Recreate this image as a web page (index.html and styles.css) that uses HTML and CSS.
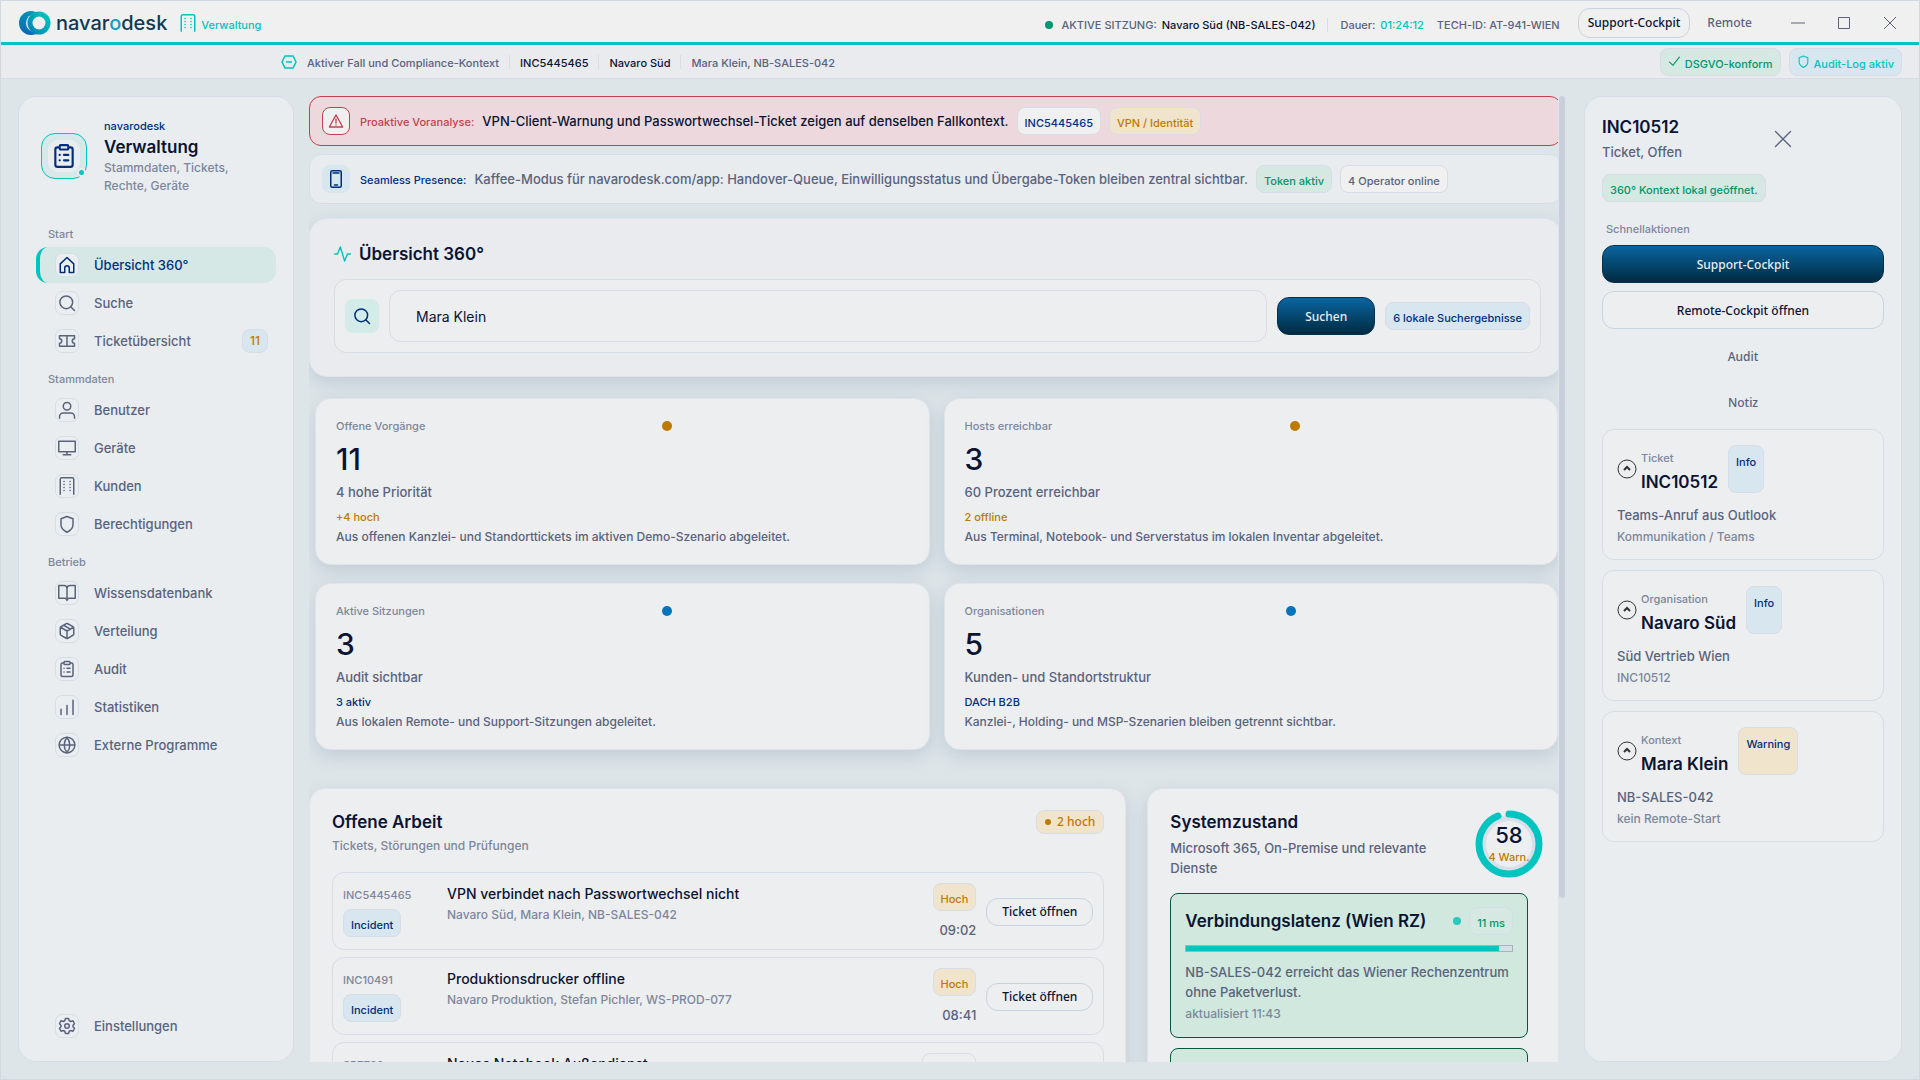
FILE: index.html
```html
<!DOCTYPE html>
<html lang="de">
<head>
    <meta charset="UTF-8">
    <meta name="viewport" content="width=device-width, initial-scale=1.0">
    <title>navarodesk Verwaltung</title>
    <link rel="stylesheet" href="styles.css">
</head>
<body>
    <!-- Shared icons -->
    <svg class="icon-defs" aria-hidden="true">
        <symbol id="i-clipboard" viewBox="0 0 24 24"><rect x="4" y="4" width="16" height="18" rx="2"/><rect x="8" y="2" width="8" height="4" rx="1" fill="#e9edf0"/><path d="M8 11h.1M12 11h4M8 16h.1M12 16h4"/></symbol>
        <symbol id="i-home" viewBox="0 0 24 24"><path d="M3 10.500 12 2l9 8.500V22h-6v-6a3 3 0 0 0-6 0v6H3z"/></symbol>
        <symbol id="i-search" viewBox="0 0 24 24"><circle cx="11" cy="11" r="8.500"/><path d="m17 17 5 5"/></symbol>
        <symbol id="i-ticket" viewBox="0 0 24 24"><path d="M2 9a3 3 0 0 1 0 6v4h20v-4a3 3 0 0 1 0-6V5H2zM12 5v14"/></symbol>
        <symbol id="i-user" viewBox="0 0 24 24"><circle cx="12" cy="7" r="5"/><path d="M2 23v-2a5 5 0 0 1 5-5h10a5 5 0 0 1 5 5v2"/></symbol>
        <symbol id="i-monitor" viewBox="0 0 24 24"><path d="M1 3h22v14H1zM12 17v4M7 21h10"/></symbol>
        <symbol id="i-building" viewBox="0 0 24 24"><path d="M3 23V3a2 2 0 0 1 2-2h14a2 2 0 0 1 2 2v20"/><path d="M8 6h.1M8 10h.1M8 14h.1M8 18h.1M16 6h.1M16 10h.1M16 14h.1M16 18h.1"/></symbol>
        <symbol id="i-shield" viewBox="0 0 24 24"><path d="M12 23s8-4 8-10V5l-8-3-8 3v8c0 6 8 10 8 10z"/></symbol>
        <symbol id="i-book" viewBox="0 0 24 24"><path d="M1 2h7a4 4 0 0 1 4 4v16a3 3 0 0 0-3-3H1zM23 2h-7a4 4 0 0 0-4 4v16a3 3 0 0 1 3-3h8z"/></symbol>
        <symbol id="i-box" viewBox="0 0 24 24"><path d="M21 16V8a2 2 0 0 0-1-1.700l-7-4a2 2 0 0 0-2 0l-7 4A2 2 0 0 0 3 8v8a2 2 0 0 0 1 1.700l7 4a2 2 0 0 0 2 0l7-4a2 2 0 0 0 1-1.700zM3.300 7 12 12l8.700-5M12 22V12M7.500 4.300l9 5.100"/></symbol>
        <symbol id="i-chart" viewBox="0 0 24 24"><path d="M4 22v-7M12 22V10M20 22V3"/></symbol>
        <symbol id="i-globe" viewBox="0 0 24 24"><circle cx="12" cy="12" r="10.500"/><path d="M2 12h20M12 2c-5 6-5 14 0 20M12 2c5 6 5 14 0 20"/></symbol>
        <symbol id="i-gear" viewBox="0 0 24 24"><circle cx="12" cy="12" r="3"/><path d="M10 2h4l1 3 2 1 3-1 2 4-2 2v2l2 2-2 4-3-1-2 1-1 3h-4l-1-3-2-1-3 1-2-4 2-2v-2L2 9l2-4 3 1 2-1z"/></symbol>
        <symbol id="i-warning" viewBox="0 0 24 24"><path d="M12 3 2 21h20zM12 9v6M12 18h.1"/></symbol>
        <symbol id="i-phone" viewBox="0 0 24 24"><rect x="5" y="1" width="14" height="22" rx="2"/><path d="M8 4h8M10 20h4"/></symbol>
        <symbol id="i-pulse" viewBox="0 0 24 24"><path d="M1 12h4L9 2l6 20 4-10h4"/></symbol>
        <symbol id="i-check" viewBox="0 0 24 24"><path d="m3 13 6 6L21 4"/></symbol>
        <symbol id="i-close" viewBox="0 0 24 24"><path d="m3 3 18 18M21 3 3 21"/></symbol>
        <symbol id="i-up" viewBox="0 0 20 20"><circle cx="10" cy="10" r="9"/><path d="m7 11 3-3 3 3" stroke-width="2"/></symbol>
    </svg>

    <header class="titlebar">
        <a href="#" class="brand">
            <svg class="brand-logo" viewBox="0 0 32 24">
                <defs>
                    <linearGradient id="logoBlue" x1="0" y1="0" x2="0" y2="1"><stop offset="0" stop-color="#0792b5"/><stop offset="1" stop-color="#0868b4"/></linearGradient>
                    <linearGradient id="logoTeal" x1="0" y1="1" x2="1" y2="0"><stop offset="0" stop-color="#0780b8"/><stop offset="1" stop-color="#00c8bd"/></linearGradient>
                </defs>
                <circle cx="12" cy="12" r="12" fill="url(#logoBlue)"/>
                <ellipse cx="17" cy="12" rx="10" ry="9.500" fill="#f0f0f0"/>
                <circle cx="20" cy="12" r="9" fill="#f0f0f0" stroke="url(#logoTeal)" stroke-width="5"/>
            </svg>
            <span class="brand-name">navar<span class="brand-o">o</span>desk</span>
        </a>
        <span class="area"><svg class="icon"><use href="#i-building"/></svg>Verwaltung</span>
        <div class="session">
            <span class="dot green"></span>
            <span>AKTIVE SITZUNG:</span>
            <strong>Navaro Süd (NB-SALES-042)</strong>
            <span class="divider"></span>
            <span>Dauer:</span>
            <span class="teal">01:24:12</span>
            <span class="tech">TECH-ID: AT-941-WIEN</span>
        </div>
        <button class="btn pill">Support-Cockpit</button>
        <button class="btn ghost remote">Remote</button>
        <div class="window-buttons">
            <button aria-label="Minimieren"><svg viewBox="0 0 14 14"><path d="M0 7h14"/></svg></button>
            <button aria-label="Maximieren"><svg viewBox="0 0 14 14"><path d="M1.500 1.500h11v11h-11z"/></svg></button>
            <button aria-label="Schließen"><svg viewBox="0 0 14 14"><path d="m1 1 12 12M13 1 1 13"/></svg></button>
        </div>
    </header>

    <div class="contextbar">
        <svg class="context-icon" viewBox="0 0 16 14"><path d="m4 1-3 6 3 6h8l3-6-3-6zM5 7h6"/></svg>
        <span>Aktiver Fall und Compliance-Kontext</span>
        <span class="divider"></span>
        <strong>INC5445465</strong>
        <span class="divider"></span>
        <strong>Navaro Süd</strong>
        <span class="divider"></span>
        <span>Mara Klein, NB-SALES-042</span>
        <div class="context-chips">
            <span class="chip chip-green"><svg class="icon small"><use href="#i-check"/></svg>DSGVO-konform</span>
            <span class="chip chip-blue teal"><svg class="icon small"><use href="#i-shield"/></svg>Audit-Log aktiv</span>
        </div>
    </div>

    <div class="layout">
        <!-- Sidebar -->
        <aside class="sidebar">
            <div class="profile">
                <div class="profile-icon"><span><svg class="icon"><use href="#i-clipboard"/></svg></span></div>
                <div>
                    <div class="profile-app">navarodesk</div>
                    <h1>Verwaltung</h1>
                    <p>Stammdaten, Tickets, Rechte, Geräte</p>
                </div>
            </div>
            <nav class="nav">
                <h2>Start</h2>
                <a href="#" class="nav-link active"><span class="nav-icon"><svg class="icon"><use href="#i-home"/></svg></span>Übersicht 360°</a>
                <a href="#" class="nav-link"><span class="nav-icon"><svg class="icon"><use href="#i-search"/></svg></span>Suche</a>
                <a href="#" class="nav-link"><span class="nav-icon"><svg class="icon"><use href="#i-ticket"/></svg></span>Ticketübersicht<span class="nav-count">11</span></a>
                <h2>Stammdaten</h2>
                <a href="#" class="nav-link"><span class="nav-icon"><svg class="icon"><use href="#i-user"/></svg></span>Benutzer</a>
                <a href="#" class="nav-link"><span class="nav-icon"><svg class="icon"><use href="#i-monitor"/></svg></span>Geräte</a>
                <a href="#" class="nav-link"><span class="nav-icon"><svg class="icon"><use href="#i-building"/></svg></span>Kunden</a>
                <a href="#" class="nav-link"><span class="nav-icon"><svg class="icon"><use href="#i-shield"/></svg></span>Berechtigungen</a>
                <h2>Betrieb</h2>
                <a href="#" class="nav-link"><span class="nav-icon"><svg class="icon"><use href="#i-book"/></svg></span>Wissensdatenbank</a>
                <a href="#" class="nav-link"><span class="nav-icon"><svg class="icon"><use href="#i-box"/></svg></span>Verteilung</a>
                <a href="#" class="nav-link"><span class="nav-icon"><svg class="icon"><use href="#i-clipboard"/></svg></span>Audit</a>
                <a href="#" class="nav-link"><span class="nav-icon"><svg class="icon"><use href="#i-chart"/></svg></span>Statistiken</a>
                <a href="#" class="nav-link"><span class="nav-icon"><svg class="icon"><use href="#i-globe"/></svg></span>Externe Programme</a>
                <a href="#" class="nav-link settings"><span class="nav-icon"><svg class="icon"><use href="#i-gear"/></svg></span>Einstellungen</a>
            </nav>
        </aside>

        <!-- Main content -->
        <div class="main">
            <main class="content">
                <div class="alert alert-red">
                    <span class="alert-icon"><svg class="icon"><use href="#i-warning"/></svg></span>
                    <span class="alert-label">Proaktive Voranalyse:</span>
                    <span class="alert-text">VPN-Client-Warnung und Passwortwechsel-Ticket zeigen auf denselben Fallkontext.</span>
                    <span class="chip chip-plain navy">INC5445465</span>
                    <span class="chip chip-amber">VPN / Identität</span>
                </div>
                <div class="alert">
                    <span class="alert-icon"><svg class="icon"><use href="#i-phone"/></svg></span>
                    <span class="alert-label">Seamless Presence:</span>
                    <span class="alert-text">Kaffee-Modus für navarodesk.com/app: Handover-Queue, Einwilligungsstatus und Übergabe-Token bleiben zentral sichtbar.</span>
                    <span class="chip chip-green">Token aktiv</span>
                    <span class="chip chip-plain">4 Operator online</span>
                </div>

                <section class="search-panel">
                    <h2><svg class="icon"><use href="#i-pulse"/></svg>Übersicht 360°</h2>
                    <form class="search">
                        <label class="search-icon" for="q" aria-label="Suche"><svg class="icon"><use href="#i-search"/></svg></label>
                        <input id="q" type="text" value="Mara Klein">
                        <button type="button" class="btn primary">Suchen</button>
                        <span class="chip chip-blue">6 lokale Suchergebnisse</span>
                    </form>
                </section>

                <section class="stats">
                    <article class="stat">
                        <div class="stat-head"><span>Offene Vorgänge</span><i class="amber-dot"></i></div>
                        <div class="stat-value">11</div>
                        <div class="stat-sub">4 hohe Priorität</div>
                        <div class="stat-trend amber">+4 hoch</div>
                        <p>Aus offenen Kanzlei- und Standorttickets im aktiven Demo-Szenario abgeleitet.</p>
                    </article>
                    <article class="stat">
                        <div class="stat-head"><span>Hosts erreichbar</span><i class="amber-dot"></i></div>
                        <div class="stat-value">3</div>
                        <div class="stat-sub">60 Prozent erreichbar</div>
                        <div class="stat-trend amber">2 offline</div>
                        <p>Aus Terminal, Notebook- und Serverstatus im lokalen Inventar abgeleitet.</p>
                    </article>
                    <article class="stat">
                        <div class="stat-head"><span>Aktive Sitzungen</span><i></i></div>
                        <div class="stat-value">3</div>
                        <div class="stat-sub">Audit sichtbar</div>
                        <div class="stat-trend">3 aktiv</div>
                        <p>Aus lokalen Remote- und Support-Sitzungen abgeleitet.</p>
                    </article>
                    <article class="stat">
                        <div class="stat-head"><span>Organisationen</span><i></i></div>
                        <div class="stat-value">5</div>
                        <div class="stat-sub">Kunden- und Standortstruktur</div>
                        <div class="stat-trend">DACH B2B</div>
                        <p>Kanzlei-, Holding- und MSP-Szenarien bleiben getrennt sichtbar.</p>
                    </article>
                </section>

                <div class="columns">
                    <section class="panel work">
                        <header class="panel-head">
                            <div>
                                <h2>Offene Arbeit</h2>
                                <p>Tickets, Störungen und Prüfungen</p>
                            </div>
                            <span class="badge">2 hoch</span>
                        </header>
                        <ul class="tickets">
                            <li>
                                <div class="ticket-id">INC5445465<span class="chip chip-blue">Incident</span></div>
                                <div class="ticket-text"><h3>VPN verbindet nach Passwortwechsel nicht</h3><p>Navaro Süd, Mara Klein, NB-SALES-042</p></div>
                                <div class="ticket-state"><span class="chip chip-amber">Hoch</span><time>09:02</time></div>
                                <button class="btn">Ticket öffnen</button>
                            </li>
                            <li>
                                <div class="ticket-id">INC10491<span class="chip chip-blue">Incident</span></div>
                                <div class="ticket-text"><h3>Produktionsdrucker offline</h3><p>Navaro Produktion, Stefan Pichler, WS-PROD-077</p></div>
                                <div class="ticket-state"><span class="chip chip-amber">Hoch</span><time>08:41</time></div>
                                <button class="btn">Ticket öffnen</button>
                            </li>
                            <li>
                                <div class="ticket-id">SR7792<span class="chip chip-blue">Service</span></div>
                                <div class="ticket-text"><h3>Neues Notebook Außendienst</h3><p>Navaro Süd</p></div>
                                <div class="ticket-state"><span class="chip">Normal</span><time>08:15</time></div>
                                <button class="btn">Ticket öffnen</button>
                            </li>
                        </ul>
                    </section>

                    <section class="panel health">
                        <header class="panel-head">
                            <div>
                                <h2>Systemzustand</h2>
                                <p>Microsoft 365, On-Premise und relevante Dienste</p>
                            </div>
                            <div class="ring">
                                <svg viewBox="0 0 68 68">
                                    <circle class="ring-track" cx="34" cy="34" r="26"/>
                                    <circle class="ring-value" cx="34" cy="34" r="30" pathLength="100"/>
                                </svg>
                                <strong>58</strong>
                                <span>4 Warn.</span>
                            </div>
                        </header>
                        <article class="service">
                            <div class="service-head"><h3>Verbindungslatenz (Wien RZ)</h3><span class="dot"></span><span class="chip chip-green">11 ms</span></div>
                            <progress value="96" max="100" aria-label="Verbindungslatenz"></progress>
                            <p>NB-SALES-042 erreicht das Wiener Rechenzentrum ohne Paketverlust.</p>
                            <small>aktualisiert 11:43</small>
                        </article>
                        <article class="service">
                            <div class="service-head"><h3>Microsoft 365</h3></div>
                        </article>
                    </section>
                </div>
            </main>
            <div class="scrollbar"></div>
        </div>

        <!-- Context panel -->
        <aside class="details">
            <header class="details-head">
                <div>
                    <h2>INC10512</h2>
                    <p>Ticket, Offen</p>
                </div>
                <button aria-label="Schließen"><svg class="icon"><use href="#i-close"/></svg></button>
            </header>
            <span class="chip chip-green">360° Kontext lokal geöffnet.</span>
            <h3>Schnellaktionen</h3>
            <div class="actions">
                <button class="btn primary">Support-Cockpit</button>
                <button class="btn">Remote-Cockpit öffnen</button>
                <button class="btn ghost">Audit</button>
                <button class="btn ghost">Notiz</button>
            </div>
            <article class="fact">
                <div class="fact-head">
                    <svg class="fact-icon"><use href="#i-up"/></svg>
                    <div><span>Ticket</span><h4>INC10512</h4></div>
                    <span class="chip chip-blue">Info</span>
                </div>
                <p>Teams-Anruf aus Outlook</p>
                <small>Kommunikation / Teams</small>
            </article>
            <article class="fact">
                <div class="fact-head">
                    <svg class="fact-icon"><use href="#i-up"/></svg>
                    <div><span>Organisation</span><h4>Navaro Süd</h4></div>
                    <span class="chip chip-blue">Info</span>
                </div>
                <p>Süd Vertrieb Wien</p>
                <small>INC10512</small>
            </article>
            <article class="fact">
                <div class="fact-head">
                    <svg class="fact-icon"><use href="#i-up"/></svg>
                    <div><span>Kontext</span><h4>Mara Klein</h4></div>
                    <span class="chip chip-amber navy">Warning</span>
                </div>
                <p>NB-SALES-042</p>
                <small>kein Remote-Start</small>
            </article>
        </aside>
    </div>
</body>
</html>
```

FILE: styles.css
```css
:root {
    --ink: #0a1432;
    --text: #59637c;
    --muted: #7c879c;
    --navy: #002f7a;
    --teal: #00c4bf;
    --green: #00966e;
    --amber: #be7a00;
    --red: #c0414f;
    --line: #d6dde6;
    --card: #edeef0;
    --panel: #e9edf0;
}
* {
    box-sizing: border-box;
}
body {
    margin: 0;
    height: 100vh;
    display: flex;
    flex-direction: column;
    overflow: hidden;
    border: 1px solid #d3d8e0;
    background: #dde5e8;
    color: var(--text);
    font-family: Inter, "Noto Sans", sans-serif;
    font-size: 13px;
    font-weight: 500;
    line-height: 20px;
}
h1, h2, h3, h4, p, ul {
    margin: 0;
    padding: 0;
}
h1, h2, h3, h4 {
    color: var(--ink);
    font-size: 17px;
    font-weight: 600;
    line-height: 24px;
}
strong {
    color: var(--ink);
    font-weight: 500;
}
a {
    color: inherit;
    text-decoration: none;
}
button {
    font-family: inherit;
    cursor: pointer;
}
.icon-defs {
    display: none;
}
.icon {
    width: 18px;
    height: 18px;
    fill: none;
    stroke: currentColor;
    stroke-width: 2;
    stroke-linecap: round;
    stroke-linejoin: round;
    flex: none;
}
.icon.small {
    width: 13px;
    height: 13px;
    margin-top: -4px;
}
.teal {
    color: var(--teal);
}
.amber {
    color: var(--amber);
}
.dot {
    width: 8px;
    height: 8px;
    border-radius: 50%;
    background: #2cc8bd;
    flex: none;
}
.dot.green {
    background: var(--green);
}
.divider {
    width: 1px;
    height: 14px;
    background: var(--line);
}

/* Chips and buttons */
.chip {
    display: inline-flex;
    align-items: center;
    gap: 4px;
    height: 28px;
    padding: 4px 7px 0;
    border: 1px solid var(--line);
    border-radius: 8px;
    font-size: 11px;
    line-height: 16px;
    white-space: nowrap;
    flex: none;
}
.chip-green {
    background: #d6e8e2;
    color: var(--green);
}
.chip-blue {
    background: #d8e6ef;
    color: var(--navy);
}
.chip-amber {
    background: #f0e4cd;
    color: var(--amber);
}
.chip-plain {
    background: #f0f0f1;
}
.chip.navy {
    color: var(--navy);
}
.chip.teal {
    color: var(--teal);
}
.btn {
    height: 38px;
    padding: 0 15px;
    border: 1px solid #c8d3e0;
    border-radius: 12px;
    background: var(--card);
    color: var(--ink);
    font-family: "Noto Sans", "Open Sans", sans-serif;
    font-size: 12px;
    font-weight: 500;
    white-space: nowrap;
}
.btn.primary {
    background: linear-gradient(#0a659f, #002a42);
    border-color: #00304a;
    color: #e9edf0;
}
.btn.ghost {
    background: none;
    border-color: transparent;
    color: var(--text);
}

/* Title bar */
.titlebar {
    display: flex;
    align-items: center;
    height: 44px;
    padding: 2px 6px 0 18px;
    background: #f0f0f0;
    border-bottom: 3px solid var(--teal);
    font-size: 11px;
    flex: none;
}
.brand {
    display: flex;
    align-items: center;
    gap: 5px;
}
.brand-logo {
    width: 32px;
    height: 24px;
}
.brand-name {
    color: #0f3a52;
    font-size: 20px;
}
.brand-o {
    color: #0b9fc0;
}
.area {
    display: flex;
    align-items: center;
    gap: 4px;
    margin-left: 12px;
    padding-top: 4px;
    color: var(--teal);
}
.area .icon {
    margin-top: -4px;
}
.session {
    display: flex;
    align-items: center;
    gap: 5px;
    margin-left: auto;
    padding-top: 4px;
}
.session .divider {
    margin: 0 7px;
}
.session .dot {
    margin-right: 3px;
}
.session .tech {
    margin-left: 8px;
}
.btn.pill {
    height: 30px;
    margin-left: 18px;
    padding: 0 9px;
    background: #f0f0f0;
}
.btn.remote {
    height: 30px;
    padding: 0 16px;
}
.window-buttons {
    display: flex;
    margin-left: 6px;
}
.window-buttons button {
    display: flex;
    padding: 8px 16px;
    border: 0;
    background: none;
}
.window-buttons svg {
    width: 14px;
    height: 14px;
    fill: none;
    stroke: var(--text);
    stroke-width: 1;
}

/* Context bar */
.contextbar {
    display: flex;
    align-items: center;
    gap: 10px;
    height: 34px;
    padding: 0 17px 0 280px;
    background: #e9ebef;
    border-bottom: 1px solid var(--line);
    font-size: 11px;
    flex: none;
}
.contextbar > span:not(.divider),
.contextbar > strong {
    padding-top: 3px;
}
.context-icon {
    width: 16px;
    height: 14px;
    fill: none;
    stroke: var(--teal);
    stroke-width: 1.5;
}
.context-chips {
    display: flex;
    gap: 8px;
    margin-left: auto;
}

.layout {
    flex: 1;
    min-height: 0;
    display: grid;
    grid-template-columns: 276px minmax(0, 1fr) 318px;
    gap: 15px;
    padding: 17px;
}

/* Sidebar */
.sidebar {
    display: flex;
    flex-direction: column;
    padding: 18px 17px 17px;
    background: var(--panel);
    border: 1px solid var(--line);
    border-radius: 18px;
}
.profile {
    display: flex;
    align-items: center;
    gap: 17px;
    padding: 2px 5px 0;
}
.profile-icon {
    position: relative;
    width: 46px;
    height: 46px;
    padding: 6px;
    border: 1px solid var(--teal);
    border-radius: 14px;
    background: #d6e8e8;
    color: var(--navy);
    flex: none;
}
.profile-icon span {
    display: flex;
    align-items: center;
    justify-content: center;
    height: 100%;
    border-radius: 10px;
    background: #e9edf0;
}
.profile-icon .icon {
    width: 26px;
    height: 26px;
}
.profile-icon::after {
    content: "";
    position: absolute;
    right: 0;
    bottom: 1px;
    width: 5px;
    height: 5px;
    border: 2px solid var(--panel);
    border-radius: 50%;
    background: var(--teal);
}
.profile-app {
    color: var(--navy);
    font-size: 11px;
    line-height: 18px;
}
.profile p {
    color: var(--muted);
    font-size: 12px;
    line-height: 18px;
}
.nav {
    flex: 1;
    display: flex;
    flex-direction: column;
    gap: 2px;
    padding-top: 21px;
}
.nav h2 {
    margin: 9px 12px 0;
    color: var(--muted);
    font-size: 11px;
    font-weight: 500;
    line-height: 18px;
}
.nav h2 + .nav-link {
    margin-top: 2px;
}
.nav-link {
    display: flex;
    align-items: center;
    gap: 15px;
    height: 36px;
    padding: 0 8px 0 15px;
    border-left: 4px solid transparent;
    border-radius: 12px;
}
.nav-link.active {
    background: #d6e8e6;
    border-left-color: var(--teal);
    color: var(--navy);
}
.nav-icon {
    display: flex;
    align-items: center;
    justify-content: center;
    width: 24px;
    height: 24px;
    border: 1px solid var(--line);
    border-radius: 7px;
    background: #ebeef1;
}
.nav-count {
    margin-left: auto;
    padding: 0 7px;
    border: 1px solid var(--line);
    border-radius: 8px;
    background: #d8e6ef;
    color: var(--amber);
    font-size: 12px;
    line-height: 22px;
}
.nav-link.settings {
    margin-top: auto;
}

/* Main content */
.main {
    display: flex;
    gap: 1px;
    min-height: 0;
    padding-right: 4px;
}
.content {
    flex: 1;
    min-width: 0;
    overflow: hidden;
}
.content > * {
    margin-right: -4px;
}
.scrollbar {
    width: 6px;
    height: 83%;
    border-radius: 3px;
    background: #c8d0dc;
}
.alert {
    display: flex;
    align-items: center;
    gap: 8px;
    height: 50px;
    margin-bottom: 8px;
    padding: 0 12px;
    border: 1px solid var(--line);
    border-radius: 12px;
    background: #e8ecef;
}
.alert-icon {
    display: flex;
    align-items: center;
    justify-content: center;
    width: 28px;
    height: 28px;
    margin-right: 2px;
    border-radius: 8px;
    background: #d8e6ef;
    color: var(--navy);
}
.alert-label {
    padding-top: 2px;
    color: var(--navy);
    font-size: 11px;
}
.alert-red {
    border-color: var(--red);
    background: #edd9dd;
}
.alert-red .alert-icon {
    border: 1px solid var(--red);
    background: #f0f0f0;
    color: var(--red);
}
.alert-red .icon {
    width: 16px;
    height: 16px;
}
.alert-red .alert-label {
    color: var(--red);
}
.alert-red .alert-text {
    color: var(--ink);
}
.search-panel {
    margin-top: 14px;
    padding: 23px 20px 23px 24px;
    border: 1px solid #e0e4ea;
    border-radius: 18px;
    background: #e9ebef;
    box-shadow: 0 6px 18px rgba(120, 140, 170, 0.28);
}
.search-panel h2 {
    display: flex;
    align-items: center;
    gap: 8px;
    margin-bottom: 13px;
}
.search-panel h2 .icon {
    width: 17px;
    color: var(--teal);
}
.search {
    display: flex;
    align-items: center;
    gap: 10px;
    padding: 10px;
    border: 1px solid var(--line);
    border-radius: 12px;
    background: var(--card);
}
.search-icon {
    display: flex;
    align-items: center;
    justify-content: center;
    width: 34px;
    height: 34px;
    border-radius: 8px;
    background: #d3ebe9;
    color: var(--navy);
}
.search input {
    flex: 1;
    min-width: 0;
    height: 52px;
    padding: 0 26px;
    border: 1px solid var(--line);
    border-radius: 12px;
    background: none;
    color: var(--ink);
    font-family: inherit;
    font-size: 14px;
}
.search .btn {
    padding: 0 27px;
}
.stats {
    display: grid;
    grid-template-columns: 1fr 1fr;
    gap: 18px 14px;
    margin: 21px 0 38px 6px;
}
.stat {
    padding: 17px 20px;
    border: 1px solid #e0e4ea;
    border-radius: 16px;
    background: var(--card);
    box-shadow: 0 6px 18px rgba(120, 140, 170, 0.28);
}
.stat-head {
    display: flex;
    align-items: center;
    color: var(--muted);
    font-size: 11px;
}
.stat-head span,
.stat-head i {
    flex: 1 1 auto;
}
.stat-head i::before {
    content: "";
    display: block;
    width: 10px;
    height: 10px;
    border-radius: 50%;
    background: #0076b8;
}
.stat-head .amber-dot::before {
    background: var(--amber);
}
.stat-value {
    margin-top: 3px;
    color: var(--ink);
    font-size: 30px;
    line-height: 40px;
}
.stat-sub {
    margin-top: 2px;
    line-height: 22px;
}
.stat-trend {
    margin-top: 4px;
    color: var(--navy);
    font-size: 11px;
}
.stat-trend.amber {
    color: var(--amber);
}
.stat p {
    font-size: 12px;
}
.columns {
    display: grid;
    grid-template-columns: 818fr 415fr;
    gap: 21px;
}
.panel {
    min-width: 0;
    padding: 21px 22px;
    border: 1px solid #e0e4ea;
    border-radius: 16px;
    background: var(--card);
    box-shadow: 0 6px 18px rgba(120, 140, 170, 0.28);
}
.work {
    padding-right: 21px;
}
.panel-head {
    display: flex;
    justify-content: space-between;
    align-items: flex-start;
}
.work .panel-head p {
    margin-top: 2px;
    color: var(--muted);
    font-size: 12px;
}
.badge {
    display: flex;
    align-items: center;
    gap: 6px;
    height: 24px;
    padding: 0 8px;
    border: 1px solid var(--line);
    border-radius: 8px;
    background: #f0e4cd;
    color: var(--amber);
    font-family: "Noto Sans", sans-serif;
    font-size: 12px;
}
.badge::before {
    content: "";
    width: 6px;
    height: 6px;
    border-radius: 50%;
    background: var(--amber);
}
.tickets {
    display: flex;
    flex-direction: column;
    gap: 7px;
    margin-top: 16px;
    list-style: none;
}
.tickets li {
    display: grid;
    grid-template-columns: 94px 1fr auto auto;
    gap: 10px;
    height: 78px;
    padding: 10px;
    border: 1px solid var(--line);
    border-radius: 12px;
}
.ticket-id {
    display: flex;
    flex-direction: column;
    align-items: flex-start;
    gap: 4px;
    padding-top: 2px;
    color: var(--muted);
    font-size: 11px;
}
.ticket-text h3 {
    font-size: 14px;
    font-weight: 500;
    line-height: 22px;
}
.ticket-text p {
    color: var(--muted);
    font-size: 12px;
}
.ticket-state {
    display: flex;
    flex-direction: column;
    align-items: flex-end;
    gap: 9px;
}
.tickets .btn {
    align-self: center;
    height: 28px;
}
.health {
    padding-right: 18px;
}
.health .panel-head div:first-child {
    max-width: 280px;
}
.health .panel-head p {
    margin-top: 4px;
}
.ring {
    position: relative;
    display: flex;
    flex-direction: column;
    align-items: center;
    width: 68px;
    height: 68px;
    padding-top: 13px;
}
.ring svg {
    position: absolute;
    inset: 0;
    fill: none;
}
.ring-track {
    stroke: #d9dfe8;
    stroke-width: 6;
}
.ring-value {
    stroke: var(--teal);
    stroke-width: 7;
    stroke-linecap: round;
    stroke-dasharray: 94 6;
    transform: rotate(-90deg);
    transform-origin: center;
}
.ring strong {
    position: relative;
    font-size: 22px;
    line-height: 24px;
}
.ring span {
    position: relative;
    color: var(--amber);
    font-size: 11px;
    white-space: nowrap;
}
.service {
    margin: 15px 15px 0 0;
    padding: 13px 14px;
    border: 1px solid #00573f;
    border-radius: 8px;
    background: #d0e8dd;
}
.service + .service {
    margin-top: 10px;
}
.service-head {
    display: flex;
    align-items: center;
    gap: 8px;
}
.service-head h3 {
    flex: 1;
}
.service progress {
    display: block;
    appearance: none;
    width: 100%;
    height: 7px;
    margin: 10px 0;
    border: 1px solid #a9b2bb;
    background: #d9dfe8;
}
.service progress::-webkit-progress-bar {
    background: #d9dfe8;
}
.service progress::-webkit-progress-value {
    background: var(--teal);
}
.service small,
.fact small {
    display: block;
    margin-top: 2px;
    color: var(--muted);
    font-size: 12px;
}

/* Context panel */
.details {
    padding: 18px 17px;
    background: var(--panel);
    border: 1px solid var(--line);
    border-radius: 18px;
}
.details-head {
    display: grid;
    grid-template-columns: 1fr 1fr;
    align-items: center;
    margin-bottom: 12px;
}
.details-head p {
    margin-top: 3px;
}
.details-head button {
    justify-self: start;
    display: flex;
    margin-left: 30px;
    padding: 0;
    border: 0;
    background: none;
    color: var(--text);
}
.details-head .icon {
    width: 20px;
    height: 20px;
    stroke-width: 1.6;
}
.details h3 {
    margin: 17px 4px 6px;
    color: var(--muted);
    font-size: 11px;
    font-weight: 500;
    line-height: 20px;
}
.actions {
    display: flex;
    flex-direction: column;
    gap: 8px;
    margin-bottom: 8px;
}
.fact {
    margin-bottom: 10px;
    padding: 15px 14px 12px;
    border: 1px solid var(--line);
    border-radius: 12px;
    background: var(--card);
}
.fact-head {
    display: flex;
    gap: 4px;
    height: 48px;
    margin-bottom: 12px;
}
.fact-head div {
    padding-top: 3px;
}
.fact-head div span {
    display: block;
    color: var(--muted);
    font-size: 11px;
}
.fact-head h4 {
    margin-top: 2px;
}
.fact-icon {
    align-self: center;
    width: 20px;
    height: 20px;
    fill: none;
    stroke: #303234;
    stroke-width: 1;
}
.fact-head .chip {
    align-items: flex-start;
    height: 48px;
    margin-left: 6px;
    padding-top: 8px;
}
```
